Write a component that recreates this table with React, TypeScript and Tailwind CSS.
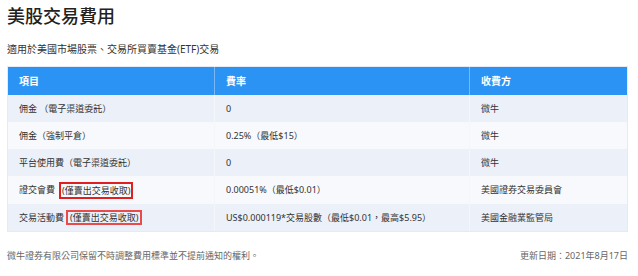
import React from "react";

const rows: { item: React.ReactNode; rate: string; payer: string; h: string }[] = [
  { item: "佣金 （電子渠道委託）", rate: "0", payer: "微牛", h: "h-[27px]" },
  { item: "佣金（強制平倉）", rate: "0.25%（最低$15）", payer: "微牛", h: "h-[27px]" },
  { item: "平台使用費（電子渠道委託）", rate: "0", payer: "微牛", h: "h-[27px]" },
  {
    item: (
      <>
        證交會費
        <span className="ml-[4px] border-2 border-[#e02020] px-[1px] py-[1px] leading-[11px]">(僅賣出交易收取)</span>
      </>
    ),
    rate: "0.00051%（最低$0.01）",
    payer: "美國證券交易委員會",
    h: "h-[28px]",
  },
  {
    item: (
      <>
        交易活動費
        <span className="ml-[2px] border-2 border-[#ea4a4a] px-[2px] py-[0px] leading-[11px]">(僅賣出交易收取)</span>
      </>
    ),
    rate: "US$0.000119*交易股數（最低$0.01，最高$5.95）",
    payer: "美國金融業監管局",
    h: "h-[27px]",
  },
];

export default function App() {
  return (
    <div
      className="w-[638px] h-[276px] bg-white px-[7px] pt-[4px] text-[#333]"
      style={{ fontFamily: '"Noto Sans", "Noto Sans CJK TC", sans-serif' }}
    >
      <h1 className="text-[18px] leading-[24px] font-medium text-[#222]">美股交易費用</h1>
      <p className="mt-[14px] text-[10px] leading-[14px] text-[#333]">適用於美國市場股票、交易所買賣基金(ETF)交易</p>
      <div className="mt-[10px] w-[621px] border border-[#e6ebf3]">
        <div className="grid grid-cols-[207px_255px_157px] h-[28px] bg-[#2b93f3] text-white font-bold text-[10px]">
          <div className="flex items-center pl-[11px] border-r border-[#7ab8f5]">項目</div>
          <div className="flex items-center pl-[11px] border-r border-[#7ab8f5]">費率</div>
          <div className="flex items-center pl-[11px]">收費方</div>
        </div>
        {rows.map((r, i) => (
          <div
            key={i}
            className={`grid grid-cols-[207px_255px_157px] ${r.h} text-[9px] text-[#333] ${
              i % 2 === 0 ? "bg-[#ecf0f8]" : "bg-[#f8f9fc]"
            }`}
          >
            <div className="flex items-center pl-[11px] border-r border-[#f4f6fa] whitespace-nowrap">{r.item}</div>
            <div className="flex items-center pl-[11px] border-r border-[#f4f6fa] whitespace-nowrap">{r.rate}</div>
            <div className="flex items-center pl-[11px] whitespace-nowrap">{r.payer}</div>
          </div>
        ))}
      </div>
      <div className="mt-[18px] w-[621px] flex justify-between text-[9px] leading-[12px] text-[#666]">
        <span>微牛證券有限公司保留不時調整費用標準並不提前通知的權利。</span>
        <span>更新日期：2021年8月17日</span>
      </div>
    </div>
  );
}
